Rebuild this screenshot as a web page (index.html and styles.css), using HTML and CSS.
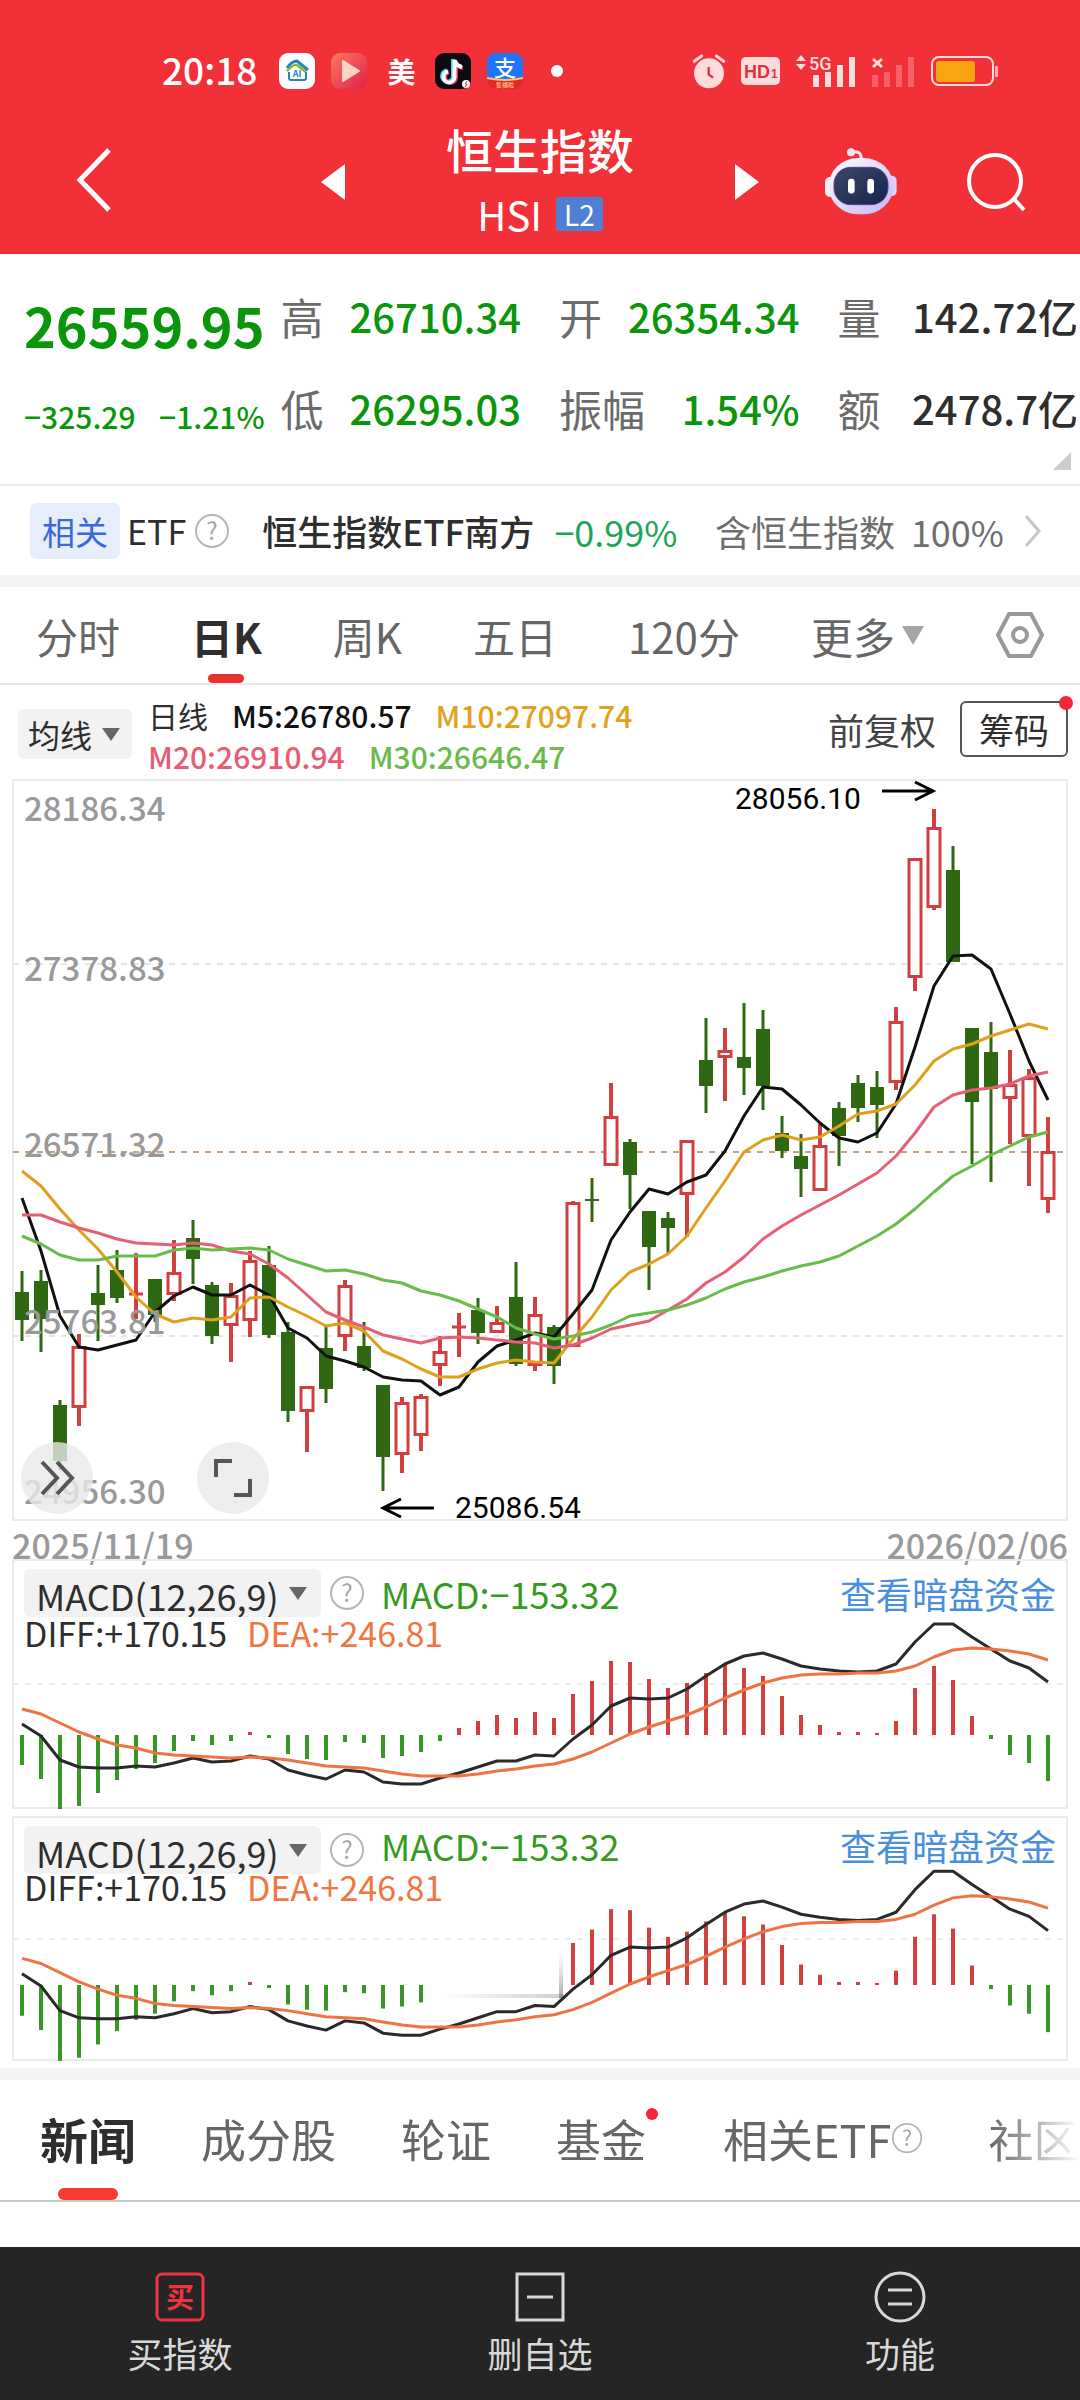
FILE: index.html
```html
<!DOCTYPE html>
<html lang="zh-CN">
<head>
  <meta charset="UTF-8">
  <title>恒生指数 HSI</title>
  <meta name="viewport" content="width=device-width, initial-scale=1.0">
  <link rel="stylesheet" href="styles.css">
</head>
<body>
  <!-- 顶部 -->
  <header class="header">
    <div class="status-bar">
      <span class="time">20:18</span>
      <div class="status-apps">
        <svg width="36" height="36" viewBox="0 0 36 36">
          <rect width="36" height="36" rx="9" fill="#fff"/>
          <path d="M8 15 Q13 8 18 8 L29 17" fill="none" stroke="#2b7fc0" stroke-width="3"/>
          <path d="M8 18 Q14 11 18 12 L27 19" fill="none" stroke="#7db63a" stroke-width="2.5"/>
          <path d="M10 19 V25 Q10 27 12 27 H25 Q27 27 27 25 V19" fill="none" stroke="#2b7fc0" stroke-width="2"/>
          <text x="18" y="24" text-anchor="middle" font-size="9" font-weight="700" fill="#2b7fc0">AI</text>
        </svg>
        <svg width="36" height="36" viewBox="0 0 36 36">
          <defs><linearGradient id="play" x1="0" y1="0" x2="1" y2="1"><stop offset="0" stop-color="#fa7a5c"/><stop offset="1" stop-color="#e0204c"/></linearGradient></defs>
          <rect width="36" height="36" rx="9" fill="url(#play)"/>
          <path d="M12 8 L28 18 L12 28 Z" fill="#ffd3c8" stroke="#ffd3c8" stroke-width="2" stroke-linejoin="round"/>
        </svg>
        <span class="app-text">美</span>
        <svg width="36" height="36" viewBox="0 0 36 36">
          <rect width="36" height="36" rx="9" fill="#0c0b14"/>
          <g fill="none" stroke-width="4">
            <path d="M18 6 V23 A5.500 5.500 0 1 1 12 17.500 M18 6 Q19 13 26 13" stroke="#35e0e4"/>
            <path d="M21 8 V25 A5.500 5.500 0 1 1 14 19 M21 8 Q22 14 28 15" stroke="#f0315c"/>
            <path d="M19.500 7 V24 A5.500 5.500 0 1 1 13 18.500 M19.500 7 Q21 13 27 14" stroke="#fff"/>
          </g>
          <circle cx="31" cy="31" r="4" fill="#fff"/>
          <path d="M32 28 L30 31 H32 L30 34" fill="none" stroke="#e33" stroke-width="1"/>
        </svg>
        <svg width="36" height="36" viewBox="0 0 36 36">
          <defs><clipPath id="pay"><rect width="36" height="36" rx="9"/></clipPath></defs>
          <g clip-path="url(#pay)">
            <rect width="36" height="36" fill="#1f74fb"/>
            <path d="M0 25 Q18 29 36 25 V36 H0 Z" fill="#e9261f"/>
            <path d="M0 25 Q18 29 36 25" fill="none" stroke="#ffc07a" stroke-width="2"/>
          </g>
          <text x="18" y="23" text-anchor="middle" font-size="22" font-weight="500" fill="#fff">支</text>
          <text x="18" y="34" text-anchor="middle" font-size="6" fill="#ffe2b0">集福啦</text>
        </svg>
        <i class="more-dot"></i>
      </div>
      <div class="status-right">
        <svg width="32" height="35" viewBox="42 41 96 105" fill="#ffdcdc">
          <circle cx="90" cy="99" r="45"/>
          <path d="M46 63 L68 47 M112 47 L134 63" stroke="#ffdcdc" stroke-width="9" stroke-linecap="round"/>
          <path d="M89 80 V102 L102 112" fill="none" stroke="#e2303a" stroke-width="7"/>
        </svg>
        <svg width="39" height="28" viewBox="0 0 39 28">
          <rect width="39" height="28" rx="5" fill="#ffdcdc"/>
          <text x="3" y="21" font-size="18" font-weight="700" class="hd-text">HD</text>
          <text x="30" y="21" font-size="12" font-weight="700" class="hd-text">1</text>
        </svg>
        <svg width="60" height="33" viewBox="0 0 60 33" fill="#ffdcdc">
          <path d="M0 6 L5 0 L10 6 Z M0 9 L5 15 L10 9 Z"/>
          <text x="13" y="15" font-size="18" font-weight="500" class="net-text">5G</text>
          <path d="M17 20 h6 v12 h-6 Z M29 17 h6 v15 h-6 Z M41 10 h6 v22 h-6 Z M53 2 h6 v30 h-6 Z"/>
        </svg>
        <svg width="43" height="33" viewBox="0 0 43 33">
          <path d="M1 4 L10 12 M10 4 L1 12" stroke="#ffdcdc" stroke-width="3"/>
          <path d="M0 20 h6 v12 h-6 Z M12 17 h6 v15 h-6 Z M24 10 h6 v22 h-6 Z M36 2 h6 v30 h-6 Z" fill="#f8606a"/>
        </svg>
        <svg width="67" height="32" viewBox="0 0 67 32">
          <rect x="1" y="2" width="61" height="28" rx="7" fill="none" stroke="#ffdcdc" stroke-width="2"/>
          <rect x="5" y="6" width="39" height="21" rx="3" fill="#fca312"/>
          <rect x="64" y="11" width="3" height="11" rx="1" fill="#ffb9b9"/>
        </svg>
      </div>
    </div>

    <div class="title-bar">
      <div class="title-left">
        <button class="icon-btn" aria-label="返回">
          <svg width="36" height="66" viewBox="0 0 36 66"><path d="M33 3 L4 33 L33 63" fill="none" stroke="#fff" stroke-width="5"/></svg>
        </button>
      </div>
      <div class="title-center">
        <button class="icon-btn" aria-label="上一个"><svg width="24" height="36" viewBox="0 0 24 36"><path d="M24 0 V36 L0 18 Z" fill="#fff"/></svg></button>
        <div class="title-text">
          <h1>恒生指数</h1>
          <p class="code">HSI <span class="level">L2</span></p>
        </div>
        <button class="icon-btn" aria-label="下一个"><svg width="24" height="36" viewBox="0 0 24 36"><path d="M0 0 V36 L24 18 Z" fill="#fff"/></svg></button>
      </div>
      <div class="title-right">
        <button class="icon-btn" aria-label="智能助手">
          <svg width="74" height="70" viewBox="432 314 222 210">
            <defs>
              <linearGradient id="head" x1="0" y1="0" x2="1" y2="1"><stop offset="0" stop-color="#fff"/><stop offset="1" stop-color="#c3b5f3"/></linearGradient>
              <linearGradient id="face" x1="0" y1="0" x2="1" y2="1"><stop offset="0" stop-color="#3c4767"/><stop offset="1" stop-color="#16234c"/></linearGradient>
            </defs>
            <path d="M514 330 Q544 322 544 352" fill="none" stroke="#f3e9f8" stroke-width="9"/>
            <circle cx="513" cy="330" r="12" fill="#f3e3ee"/>
            <rect x="435" y="404" width="30" height="60" rx="15" fill="#f0ecfb"/>
            <rect x="620" y="400" width="30" height="62" rx="15" fill="#d9d1f6"/>
            <rect x="446" y="347" width="194" height="169" rx="88" fill="url(#head)"/>
            <rect x="462" y="375" width="162" height="112" rx="50" fill="url(#face)" stroke="#5b3ba8" stroke-width="3"/>
            <rect x="504" y="409" width="20" height="45" rx="10" fill="#fff"/>
            <rect x="562" y="409" width="20" height="45" rx="10" fill="#fff"/>
          </svg>
        </button>
        <button class="icon-btn" aria-label="搜索">
          <svg width="60" height="62" viewBox="0 0 60 62" fill="none" stroke="#fff" stroke-width="4"><circle cx="29" cy="30" r="26"/><path d="M48 48 L58 59"/></svg>
        </button>
      </div>
    </div>
  </header>

  <main>
    <!-- 行情 -->
    <section class="quote">
      <div class="quote-main">
        <div class="price">26559.95</div>
        <div class="change"><span>−325.29</span><span>−1.21%</span></div>
      </div>
      <dl class="stats">
        <div><dt>高</dt><dd class="down">26710.34</dd></div>
        <div><dt>开</dt><dd class="down">26354.34</dd></div>
        <div><dt>量</dt><dd>142.72亿</dd></div>
        <div><dt>低</dt><dd class="down">26295.03</dd></div>
        <div><dt>振幅</dt><dd class="down">1.54%</dd></div>
        <div><dt>额</dt><dd>2478.7亿</dd></div>
      </dl>
      <i class="corner"></i>
    </section>

    <!-- 相关ETF -->
    <a class="etf" href="#">
      <span class="etf-tag">相关</span>
      <span class="etf-label">ETF</span>
      <svg class="help" viewBox="0 0 36 36"><circle cx="18" cy="18" r="16"/><text x="18" y="27" text-anchor="middle">?</text></svg>
      <span class="etf-name">恒生指数ETF南方</span>
      <span class="etf-change">−0.99%</span>
      <span class="etf-hold">含恒生指数</span>
      <span class="etf-percent">100%</span>
      <svg class="etf-arrow" width="18" height="34" viewBox="0 0 18 34"><path d="M2 2 L15 17 L2 32" fill="none" stroke="#c6c6c6" stroke-width="3"/></svg>
    </a>

    <!-- 周期切换 -->
    <nav class="periods">
      <button>分时</button>
      <button class="active">日K</button>
      <button>周K</button>
      <button>五日</button>
      <button>120分</button>
      <button>更多<svg width="24" height="19" viewBox="0 0 24 19"><path d="M1 0 H23 L12 19 Z" fill="#a6a6a6"/></svg></button>
      <button aria-label="设置"><svg width="48" height="48" viewBox="0 0 48 48" fill="none" stroke="#999" stroke-width="4" stroke-linejoin="round"><path d="M13 3 H35 L46 24 L35 45 H13 L2 24 Z"/><circle cx="24" cy="24" r="7"/></svg></button>
    </nav>

    <!-- 均线 -->
    <div class="legend">
      <select class="picker picker-small" aria-label="主图指标"><option>均线</option></select>
      <div class="legend-values">
        <p><span class="c-dark">日线</span><span class="c-black">M5:26780.57</span><span class="c-ma10">M10:27097.74</span></p>
        <p><span class="c-ma20">M20:26910.94</span><span class="c-ma30">M30:26646.47</span></p>
      </div>
      <button class="adjust">前复权</button>
      <button class="chips">筹码<i class="red-dot"></i></button>
    </div>

    <!-- K线图 -->
    <div class="chart">
      <svg id="kline" viewBox="0 0 1080 742"></svg>
      <div class="chart-tools">
        <button aria-label="展开"><svg width="34" height="36" viewBox="0 0 34 36"><path d="M2 2 L17 18 L2 34 M17 2 L32 18 L17 34"/></svg></button>
        <button aria-label="全屏"><svg width="38" height="38" viewBox="0 0 38 38"><path d="M2 18 V2 H18 M36 20 V36 H20" /></svg></button>
      </div>
    </div>
    <div class="dates"><span>2025/11/19</span><span>2026/02/06</span></div>

    <!-- MACD -->
    <section class="panel">
      <svg id="macd1" viewBox="0 0 1080 250"></svg>
      <div class="panel-head">
        <div class="panel-row">
          <select class="picker" aria-label="副图指标一"><option>MACD(12,26,9)</option></select>
          <svg class="help" viewBox="0 0 36 36"><circle cx="18" cy="18" r="16"/><text x="18" y="27" text-anchor="middle">?</text></svg>
          <span class="c-macd">MACD:−153.32</span>
          <a href="#">查看暗盘资金</a>
        </div>
        <div class="panel-values"><span>DIFF:+170.15</span><span class="c-dea">DEA:+246.81</span></div>
      </div>
    </section>
    <section class="panel panel-second">
      <svg id="macd2" viewBox="0 0 1080 245"></svg>
      <div class="panel-head">
        <div class="panel-row">
          <select class="picker" aria-label="副图指标二"><option>MACD(12,26,9)</option></select>
          <svg class="help" viewBox="0 0 36 36"><circle cx="18" cy="18" r="16"/><text x="18" y="27" text-anchor="middle">?</text></svg>
          <span class="c-macd">MACD:−153.32</span>
          <a href="#">查看暗盘资金</a>
        </div>
        <div class="panel-values"><span>DIFF:+170.15</span><span class="c-dea">DEA:+246.81</span></div>
      </div>
    </section>

    <!-- 资讯 -->
    <nav class="news">
      <div class="news-tabs">
        <button class="active">新闻</button>
        <button>成分股</button>
        <button>轮证</button>
        <button class="with-dot">基金<i class="red-dot"></i></button>
        <button>相关ETF<svg class="help" viewBox="0 0 36 36"><circle cx="18" cy="18" r="16"/><text x="18" y="27" text-anchor="middle">?</text></svg></button>
        <button>社区</button>
      </div>
    </nav>
  </main>

  <!-- 底部操作 -->
  <footer class="bottom-bar">
    <button>
      <svg width="50" height="50" viewBox="0 0 50 50"><rect x="2" y="2" width="46" height="46" rx="5" fill="none" stroke="#ee3340" stroke-width="3"/><text x="25" y="36" text-anchor="middle" font-size="28" font-weight="700" fill="#ee3340">买</text></svg>
      买指数
    </button>
    <button>
      <svg width="50" height="50" viewBox="0 0 50 50" fill="none" stroke="#d8d8d8" stroke-width="3"><rect x="2" y="2" width="46" height="46"/><path d="M12 25 H38"/></svg>
      删自选
    </button>
    <button>
      <svg width="52" height="52" viewBox="0 0 52 52" fill="none" stroke="#d8d8d8" stroke-width="3"><circle cx="26" cy="26" r="24"/><path d="M14 19 H38 M14 33 H38"/></svg>
      功能
    </button>
  </footer>

  <script src="chart.js"></script>
</body>
</html>
```

FILE: styles.css
```css
/* 全局 */
* {
  box-sizing: border-box;
}

body {
  margin: 0;
  min-height: 100vh;
  display: flex;
  flex-direction: column;
  background: #fff;
  color: #2e2e2e;
  font-family: "Noto Sans CJK SC", sans-serif;
  overflow-x: hidden;
}

h1, p, dl, dd {
  margin: 0;
}

button, select {
  margin: 0;
  padding: 0;
  border: none;
  background: none;
  color: inherit;
  font-family: inherit;
  font-size: inherit;
}

a {
  text-decoration: none;
}

svg {
  flex-shrink: 0;
  overflow: visible;
}

.icon-btn svg {
  display: block;
}

.red-dot {
  position: absolute;
  width: 14px;
  height: 14px;
  border-radius: 50%;
  background: #f32735;
}

.help {
  width: 36px;
  height: 36px;
  fill: none;
  stroke: #b5b5b5;
  stroke-width: 2;
}

.help text {
  font-size: 24px;
  fill: #a5a5a5;
  stroke: none;
}

/* 顶部 */
.header {
  background: #f13038;
  color: #fff;
  padding-top: 46px;
}

.status-bar {
  display: flex;
  align-items: center;
  height: 50px;
  padding: 0 82px 0 162px;
}

.time {
  font-size: 37px;
  font-weight: 500;
  line-height: 46px;
  padding-bottom: 4px;
}

.status-apps, .status-right {
  display: flex;
  align-items: center;
  gap: 16px;
}

.status-apps {
  margin-left: 22px;
}

.app-text {
  width: 36px;
  text-align: center;
  font-size: 28px;
  font-weight: 700;
  line-height: 36px;
}

.more-dot {
  width: 12px;
  height: 12px;
  margin-left: 12px;
  border-radius: 50%;
  background: #fff;
}

.status-right {
  margin-left: auto;
}

.hd-text {
  fill: #e2303a;
  font-family: "Liberation Sans", sans-serif;
}

.net-text {
  font-family: Roboto, sans-serif;
}

.title-bar {
  display: grid;
  grid-template-columns: 1fr 438px 1fr;
  align-items: center;
  height: 158px;
  padding-top: 14px;
}

.title-left {
  padding-left: 76px;
}

.title-center {
  display: flex;
  align-items: center;
  justify-content: space-between;
}

.title-text {
  text-align: center;
}

.title-text h1 {
  font-size: 47px;
  font-weight: 500;
  line-height: 64px;
}

.code {
  display: flex;
  align-items: center;
  justify-content: center;
  gap: 14px;
  font-size: 40px;
  line-height: 66px;
}

.level {
  padding: 0 8px;
  border-radius: 3px;
  background: #5080d4;
  font-size: 28px;
  line-height: 34px;
}

.title-right {
  display: flex;
  align-items: center;
  justify-content: flex-end;
  gap: 68px;
  padding-right: 54px;
}

/* 行情 */
.quote {
  position: relative;
  display: flex;
  padding: 32px 2px 46px 24px;
  border-bottom: 2px solid #ebebeb;
}

.quote-main {
  flex: 0 0 240px;
  color: #0a960a;
}

.price {
  font-size: 54px;
  font-weight: 700;
  line-height: 78px;
}

.change {
  display: flex;
  justify-content: space-between;
  font-size: 30px;
  font-weight: 500;
  line-height: 44px;
  padding-top: 30px;
}

.stats {
  flex: 1;
  display: grid;
  grid-template-columns: repeat(3, 1fr);
  gap: 31px 38px;
  margin-left: 16px;
}

.stats div {
  display: flex;
  justify-content: space-between;
  font-size: 40px;
  line-height: 60px;
  white-space: nowrap;
}

.stats dt {
  color: #6b6b6b;
  font-size: 43px;
}

.stats dd {
  font-weight: 500;
}

.stats .down {
  color: #0a960a;
}

.corner {
  position: absolute;
  right: 9px;
  bottom: 14px;
  border-left: 18px solid transparent;
  border-bottom: 18px solid #ccc;
}

/* 相关ETF */
.etf {
  display: flex;
  align-items: center;
  height: 89px;
  padding: 0 38px 0 30px;
  color: #2e2e2e;
  font-size: 36px;
  white-space: nowrap;
}

.etf-tag {
  padding: 0 12px;
  border-radius: 6px;
  background: #e6eefc;
  color: #3c67d8;
  font-size: 33px;
  line-height: 56px;
}

.etf-label {
  margin: 0 8px 0 7px;
  font-size: 34px;
}

.etf-name {
  margin: 0 20px 0 32px;
  font-size: 35px;
  font-weight: 500;
}

.etf-change {
  color: #20a558;
}

.etf-hold {
  margin-left: auto;
  color: #6e6e6e;
}

.etf-percent {
  margin: 0 20px 0 16px;
  color: #6e6e6e;
}

/* 周期切换 */
.periods {
  display: flex;
  justify-content: space-between;
  padding: 0 36px;
  height: 110px;
  border-top: 12px solid #f4f4f4;
  border-bottom: 2px solid #e8e8e8;
  color: #666;
  font-size: 42px;
}

.periods button {
  position: relative;
  display: flex;
  align-items: center;
  gap: 6px;
}

.periods .active {
  color: #2e2e2e;
  font-weight: 700;
}

.periods .active::after {
  content: "";
  position: absolute;
  left: 50%;
  bottom: 0;
  width: 36px;
  height: 9px;
  margin-left: -18px;
  border-radius: 5px;
  background: #e93030;
}

/* 均线 */
.legend {
  display: flex;
  align-items: center;
  padding: 0 12px 6px 18px;
  height: 94px;
}

.picker {
  appearance: none;
  height: 48px;
  padding: 0 42px 0 12px;
  border-radius: 6px;
  color: #2e2e2e;
  font-size: 36px;
  background: #f2f2f2 url("data:image/svg+xml,%3Csvg xmlns='http://www.w3.org/2000/svg' width='18' height='13'%3E%3Cpath d='M0 0H18L9 13Z' fill='%23666'/%3E%3C/svg%3E") no-repeat right 14px center;
}

.picker-small {
  height: 50px;
  padding: 0 39px 0 10px;
  margin-top: 10px;
  font-size: 32px;
  background-position: right 12px center;
}

.legend-values {
  padding: 14px 0 0 16px;
  font-size: 30px;
  font-weight: 500;
  line-height: 41px;
}

.legend-values p {
  display: flex;
  gap: 24px;
}

.c-dark {
  font-weight: 400;
}

.c-black {
  color: #111;
}

.c-ma10 {
  color: #e3a11c;
}

.c-ma20 {
  color: #ea5b73;
}

.c-ma30 {
  color: #69bb4a;
}

.adjust {
  margin-left: auto;
  color: #444;
  font-size: 36px;
}

.chips {
  position: relative;
  margin-left: 24px;
  height: 56px;
  padding: 0 17px;
  border: 2px solid #555;
  border-radius: 6px;
  font-size: 35px;
  line-height: 50px;
}

.chips .red-dot {
  top: -7px;
  right: -7px;
}

/* 图表 */
.chart, .panel {
  display: grid;
}

.chart > *, .panel > * {
  grid-area: 1 / 1;
}

.chart > svg, .panel > svg {
  display: block;
  width: 100%;
}

.axis-text {
  font-size: 33px;
  font-weight: 500;
  fill: #999;
}

.mark-text {
  font-family: Roboto, sans-serif;
  font-size: 30px;
  fill: #000;
}

.chart-tools {
  display: flex;
  align-self: end;
  gap: 104px;
  padding: 0 0 7px 21px;
}

.chart-tools button {
  display: flex;
  align-items: center;
  justify-content: center;
  width: 72px;
  height: 72px;
  border-radius: 50%;
  background: rgba(232, 232, 232, 0.8);
}

.chart-tools path {
  fill: none;
  stroke: #555;
  stroke-width: 4;
}

.dates {
  display: flex;
  justify-content: space-between;
  padding: 0 12px;
  color: #999;
  font-size: 34px;
  font-weight: 500;
  line-height: 48px;
  height: 38px;
}

.panel-second {
  margin: 7px 0;
}

.panel-head {
  padding: 10px 24px 0;
  font-size: 34px;
}

.panel-row {
  display: flex;
  align-items: center;
  height: 48px;
}

.panel-row .help {
  margin: 0 16px 0 8px;
}

.panel-row a {
  margin-left: auto;
  color: #4a8fdc;
  font-size: 36px;
}

.panel-values {
  display: flex;
  gap: 20px;
  line-height: 32px;
}

.panel-second .panel-row span,
.panel-second .panel-row a {
  padding-bottom: 10px;
}

.panel-second .panel-values {
  line-height: 26px;
}

.c-macd {
  color: #349b20;
  font-size: 36px;
}

.c-dea {
  color: #ef7640;
}

/* 资讯 */
.news {
  border-top: 12px solid #f4f4f4;
  border-bottom: 2px solid #c4cac9;
  margin-bottom: 45px;
}

.news-tabs {
  display: flex;
  gap: 65px;
  height: 120px;
  padding-left: 40px;
  overflow: hidden;
  color: #666;
  font-size: 45px;
  white-space: nowrap;
  -webkit-mask-image: linear-gradient(to right, #000 calc(100% - 90px), transparent);
  mask-image: linear-gradient(to right, #000 calc(100% - 90px), transparent);
}

.news-tabs button {
  position: relative;
  display: flex;
  align-items: center;
  flex-shrink: 0;
  padding-bottom: 4px;
}

.news-tabs .active {
  color: #2e2e2e;
  font-size: 48px;
  font-weight: 700;
}

.news-tabs .active::after {
  content: "";
  position: absolute;
  left: 50%;
  bottom: 0;
  width: 60px;
  height: 12px;
  margin-left: -30px;
  border-radius: 6px;
  background: #f83b30;
}

.news-tabs .with-dot {
  padding-right: 12px;
}

.with-dot .red-dot {
  top: 28px;
  right: 0;
  width: 12px;
  height: 12px;
}

.news-tabs .help {
  width: 32px;
  height: 32px;
}

/* 底部操作 */
.bottom-bar {
  flex: 1;
  display: grid;
  grid-template-columns: repeat(3, 1fr);
  align-items: start;
  padding: 24px 0;
  background: #252525;
  color: #d8d8d8;
  font-size: 35px;
  line-height: 52px;
}

.bottom-bar button {
  display: flex;
  flex-direction: column;
  align-items: center;
  gap: 4px;
}

.bottom-bar svg {
  height: 52px;
}
```

FILE: chart.js
```js
const STEP = 19;
const START = 22;
const RED = '#d23f3f';
const GREEN = '#2f6812';

// [最高, 最低, 实体上沿, 实体下沿, 是否上涨]
const candles = [
  [492,562,513,541,0],[491,573,502,540,0],[621,691,626,682,0],[555,647,567,629,1],[486,562,514,526,0],
  [471,524,491,519,0],[474,540,514,516,1],[500,543,500,536,0],[461,522,493,516,1],[441,505,459,480,0],
  [503,565,506,557,0],[504,583,516,547,1],[472,558,481,542,1],[467,559,486,556,0],[543,643,553,632,0],
  [607,673,607,633,1],[547,624,569,610,0],[501,572,506,558,1],[543,592,567,589,0],[606,712,606,678,0],
  [618,694,623,676,1],[615,672,617,657,1],[557,607,572,587,1],[534,578,547,549,1],[519,565,531,554,0],
  [527,554,543,554,1],[483,587,518,585,0],[518,592,535,587,1],[546,605,548,587,0],[422,568,423,568,1],
  [399,443,420,422,0],[304,387,337,387,1],[360,430,363,396,0],[432,511,432,468,0],[433,474,439,449,0],
  [361,458,361,416,1],[239,334,281,307,0],[249,322,271,279,1],[224,316,278,289,0],[231,331,250,307,0],
  [337,379,354,372,0],[355,418,377,390,0],[345,412,366,412,1],[323,387,329,357,0],[296,343,304,329,0],
  [292,359,308,326,0],[228,311,242,304,1],[79,212,79,199,1],[30,131,48,129,1],[67,183,91,183,0],
  [249,385,249,323,0],[243,403,273,310,0],[271,365,305,320,1],[290,407,298,358,1],[338,434,372,421,1]
];

const ma5 = [419,472,537,568,571,566,561,533,517,508,516,516,506,516,549,559,577,582,588,598,601,602,616,608,583,567,561,554,558,535,511,461,433,410,415,403,396,372,337,308,310,326,344,359,363,354,325,268,207,177,176,190,235,282,321];
const ma10 = [392,407,430,451,470,493,518,535,543,539,541,538,519,518,528,537,547,544,552,572,580,590,598,598,590,584,581,583,584,560,538,511,493,485,475,457,429,402,373,361,356,361,358,347,335,332,325,306,282,270,265,257,251,245,250];
const ma20 = [436,436,443,449,454,460,464,465,466,464,466,472,475,485,499,516,533,541,548,556,560,564,559,558,559,561,563,564,569,566,559,550,546,542,531,520,504,493,478,460,447,436,426,416,405,394,377,354,328,316,311,309,305,297,293];
const ma30 = [457,465,476,481,481,477,477,477,471,469,471,470,469,471,480,486,492,491,495,501,504,512,516,522,530,538,549,555,560,557,553,546,537,534,531,526,519,510,503,498,492,487,483,477,467,457,445,430,413,397,387,376,367,358,353];

const macdBars = [-30,-44,-74,-71,-58,-45,-34,-28,-16,-6,-10,-6,3,-3,-19,-24,-25,-7,-8,-23,-21,-17,-6,7,14,20,17,23,17,41,54,74,73,56,47,52,62,71,67,59,39,20,10,3,3,2,14,47,69,55,19,-4,-20,-28,-46];
const diff = [11,-1,-25,-32,-33,-33,-31,-32,-28,-23,-27,-26,-21,-24,-35,-40,-44,-35,-37,-47,-49,-49,-43,-38,-32,-26,-26,-20,-21,-4,10,29,37,36,37,46,59,71,79,82,76,69,66,64,63,64,71,93,111,111,98,86,74,67,53];
const dea = [26,21,12,3,-4,-10,-13,-18,-20,-21,-22,-23,-22,-23,-25,-28,-31,-32,-33,-36,-39,-41,-41,-41,-39,-36,-34,-31,-29,-24,-17,-8,1,8,14,20,28,37,45,52,57,60,61,61,62,62,64,69,78,85,87,86,84,81,75];

const px = i => START + i * STEP;

function line(values, color, width) {
  const points = values.map((v, i) => px(i) + ',' + v).join(' ');
  return `<polyline points="${points}" fill="none" stroke="${color}" stroke-width="${width}" stroke-linejoin="round"/>`;
}

function grid(y, color) {
  return `<path d="M13 ${y} H1067" stroke="${color}" stroke-width="2" stroke-dasharray="6 6"/>`;
}

function frame(h) {
  return `<rect x="13" y="1" width="1054" height="${h - 2}" fill="none" stroke="#ebebeb" stroke-width="2"/>`;
}

function drawKline() {
  let s = frame(742) + grid(185, '#e6e6e6') + grid(557, '#e6e6e6') + grid(373, '#c9a377');
  candles.forEach(([hi, lo, top, bottom, up], i) => {
    const x = px(i);
    if (up) {
      s += `<path d="M${x} ${hi} V${top} M${x} ${bottom} V${lo}" stroke="${RED}" stroke-width="4"/>`;
      if (bottom - top < 4) {
        s += `<path d="M${x - 7} ${top + 1} H${x + 7} M${x} ${hi} V${lo}" stroke="${RED}" stroke-width="3"/>`;
      } else {
        s += `<rect x="${x - 6}" y="${top + 1.5}" width="12" height="${bottom - top - 3}" fill="#fff" stroke="${RED}" stroke-width="3"/>`;
      }
    } else {
      s += `<path d="M${x} ${hi} V${lo}" stroke="${GREEN}" stroke-width="3"/>`;
      s += `<rect x="${x - 7}" y="${top}" width="14" height="${bottom - top}" fill="${GREEN}"/>`;
    }
  });
  s += line(ma5, '#111', 3) + line(ma10, '#dfa01e', 3) + line(ma20, '#e65f75', 3) + line(ma30, '#69bb4a', 3);
  // 坐标轴数值
  [['28186.34', 42], ['27378.83', 202], ['26571.32', 378], ['25763.81', 555], ['24956.30', 725]].forEach(([t, y]) => {
    s += `<text x="24" y="${y}" class="axis-text">${t}</text>`;
  });
  // 最高价、最低价
  s += `<text x="735" y="30" class="mark-text">28056.10</text>`;
  s += `<text x="455" y="739" class="mark-text">25086.54</text>`;
  s += `<path d="M882 12 H933 M915 3 L933 12 L915 21 M434 729 H383 M401 720 L383 729 L401 738" fill="none" stroke="#000" stroke-width="3"/>`;
  document.getElementById('kline').innerHTML = s;
}

function drawMacd(id, h, zero, scale, hidden) {
  let s = frame(h) + grid(Math.round(h / 2), '#ececec');
  macdBars.forEach((v, i) => {
    if (hidden && i >= hidden[0] && i <= hidden[1]) return;
    s += `<path d="M${px(i)} ${zero} V${zero - v * scale}" stroke="${v > 0 ? RED : '#379826'}" stroke-width="4"/>`;
  });
  if (hidden) {
    s += '<defs><linearGradient id="sh"><stop offset="0" stop-color="#888" stop-opacity="0"/><stop offset="1" stop-color="#888" stop-opacity=".4"/></linearGradient>' +
      '<linearGradient id="sv" x1="0" y1="0" x2="0" y2="1"><stop offset="0" stop-color="#888" stop-opacity="0"/><stop offset="1" stop-color="#555" stop-opacity=".5"/></linearGradient></defs>' +
      '<rect x="440" y="178" width="124" height="4" fill="url(#sh)"/><rect x="559" y="136" width="4" height="46" fill="url(#sv)"/>';
  }
  s += line(diff.map(v => zero - v * scale), '#2a2a2a', 3);
  s += line(dea.map(v => zero - v * scale), '#ee7444', 3);
  document.getElementById(id).innerHTML = s;
}

drawKline();
drawMacd('macd1', 250, 176, 1);
drawMacd('macd2', 245, 169, 1.025, [22, 28]);
```
